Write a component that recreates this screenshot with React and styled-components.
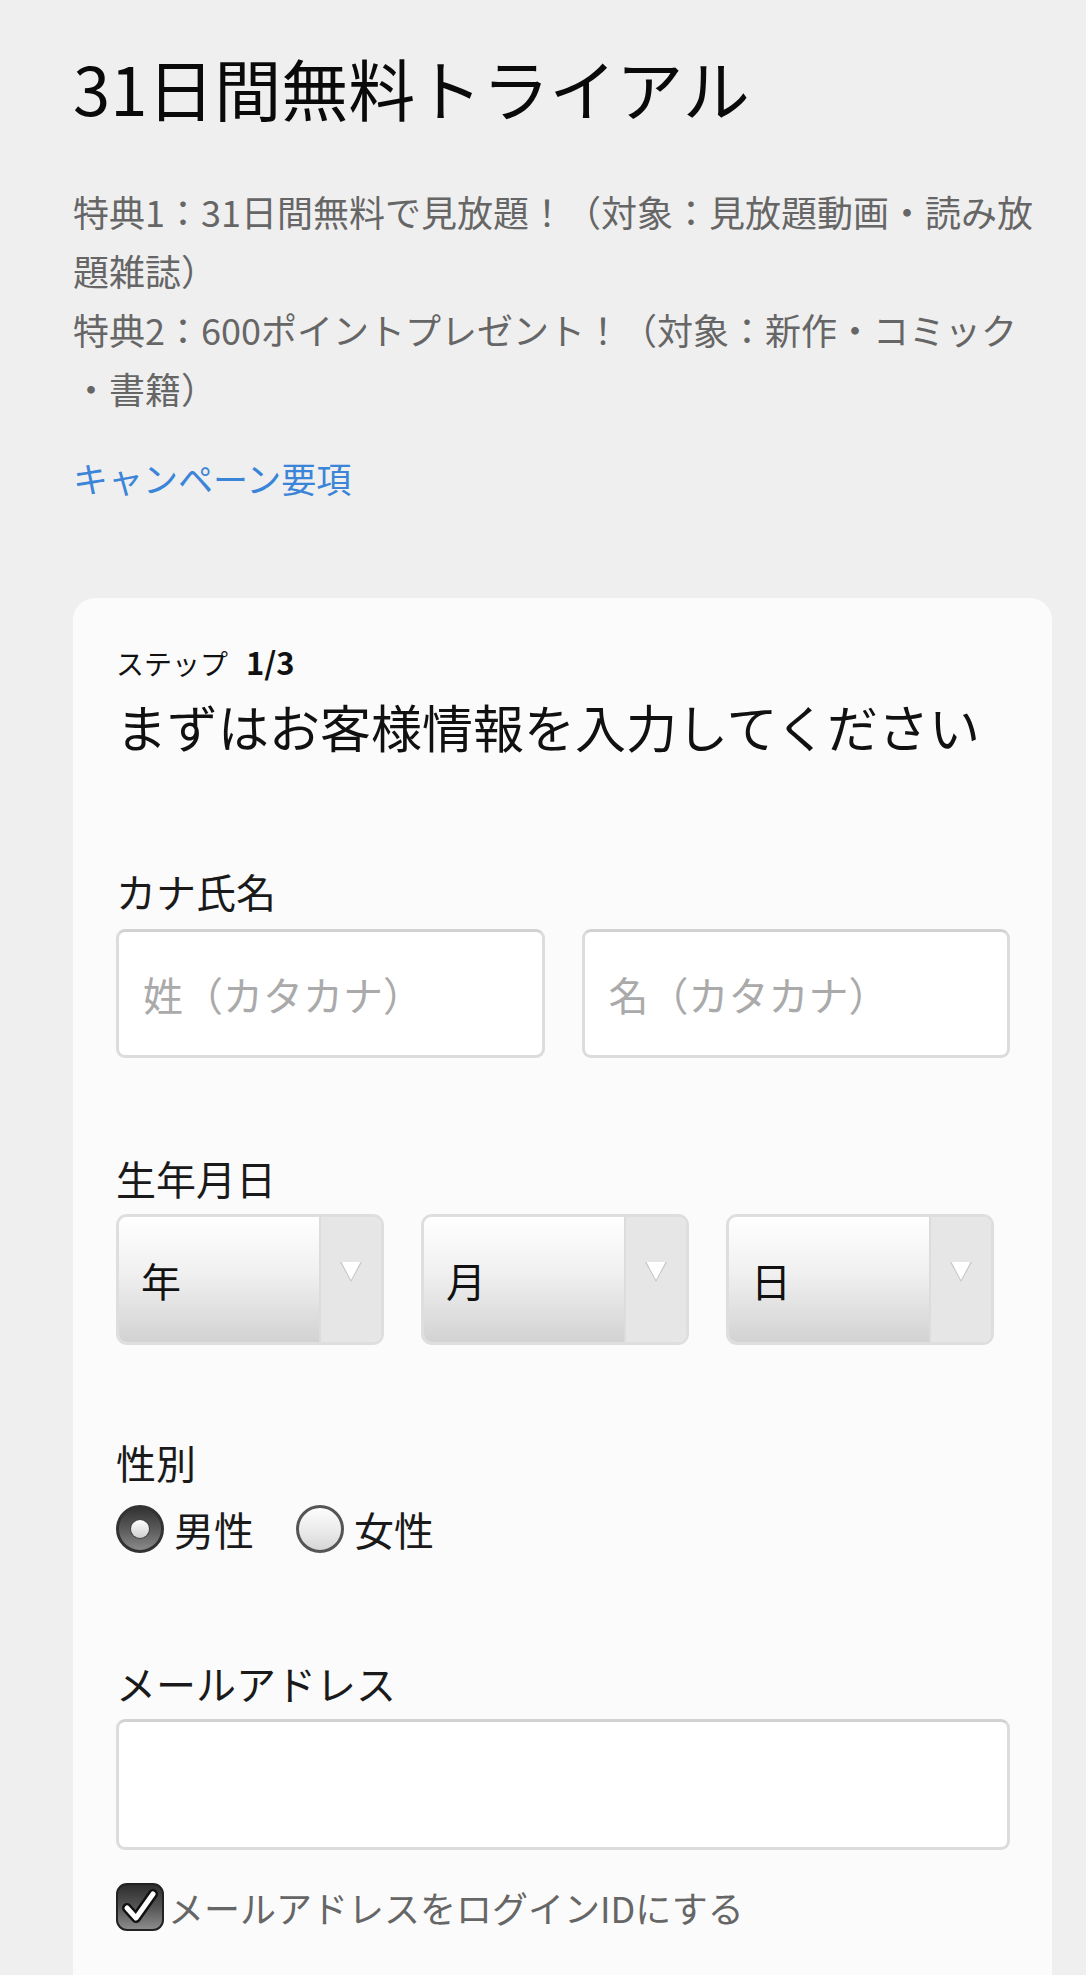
import React from "react";
import styled, { createGlobalStyle } from "styled-components";

const GlobalStyle = createGlobalStyle`
  body {
    margin: 0;
    background: #efefef;
    font-family: "Noto Sans CJK JP", "Noto Sans", sans-serif;
    color: #111;
  }
`;

const Page = styled.div`
  padding: 38px 34px 0 73px;
`;

const Title = styled.h1`
  margin: 0;
  font-size: 67px;
  font-weight: 400;
  line-height: 98px;
  color: #0a0a0a;
`;

const Benefits = styled.p`
  margin: 46px 0 0;
  font-size: 36px;
  line-height: 59px;
  color: #666;
  line-break: anywhere;
`;

const CampaignLink = styled.a`
  display: block;
  margin-top: 30px;
  font-size: 35px;
  line-height: 59px;
  color: #3b85d8;
  text-decoration: none;
`;

const Card = styled.section`
  margin-top: 91px;
  background: #fbfbfb;
  border-radius: 22px 22px 0 0;
  padding: 43px 42px 120px 43px;
`;

const Step = styled.div`
  height: 42px;
  font-size: 28px;
  line-height: 42px;
  color: #111;

  b {
    font-size: 31px;
    line-height: 42px;
    font-weight: 700;
    margin-left: 18px;
  }
`;

const Heading = styled.h2`
  margin: 8px 0 0;
  font-size: 51px;
  font-weight: 400;
  line-height: 70px;
  color: #111;
`;

const Field = styled.div`
  margin-top: ${(p) => p.$top || 90}px;
`;

const Label = styled.div`
  font-size: 40px;
  line-height: 60px;
  color: #1a1a1a;
  margin-bottom: ${(p) => p.$gap || 6}px;
`;

const NameRow = styled.div`
  display: grid;
  grid-template-columns: 1fr 1fr;
  gap: 37px;
`;

const TextInput = styled.input`
  box-sizing: border-box;
  width: 100%;
  height: ${(p) => p.$h || 129}px;
  border: 3px solid #dcdcdc;
  border-top-color: #d2d2d2;
  border-radius: 9px;
  background: #fff;
  padding: 0 24px;
  font-family: inherit;
  font-size: 40px;
  color: #111;
  outline: none;

  &::placeholder {
    color: #aaa;
  }
`;

const SelectRow = styled.div`
  display: flex;
  gap: 37px;
`;

const Select = styled.div`
  box-sizing: border-box;
  width: 268px;
  height: 131px;
  display: flex;
  border: 3px solid #dedede;
  border-radius: 11px;
  overflow: hidden;
`;

const SelectValue = styled.div`
  flex: 1;
  display: flex;
  align-items: center;
  padding-left: 22px;
  font-size: 40px;
  color: #111;
  background: linear-gradient(#ffffff 0%, #f0f0f0 45%, #d2d2d2 100%);
`;

const SelectArrow = styled.div`
  width: 62px;
  display: flex;
  justify-content: center;
  padding-top: 44px;
  box-sizing: border-box;
  background: #e6e6e6;
  border-left: 2px solid #dcdcdc;
`;

const RadioRow = styled.div`
  display: flex;
  align-items: center;
  height: 62px;
  gap: 42px;
`;

const RadioItem = styled.label`
  display: flex;
  align-items: center;
  font-size: 40px;
  color: #1a1a1a;
`;

const RadioCircle = styled.span`
  box-sizing: border-box;
  width: 48px;
  height: 48px;
  border-radius: 50%;
  margin-right: 10px;
  display: flex;
  align-items: center;
  justify-content: center;
  border: 3px solid ${(p) => (p.$checked ? "#333" : "#555")};
  background: ${(p) =>
    p.$checked
      ? "linear-gradient(#333 0%, #5a5a5a 50%, #8a8a8a 100%)"
      : "linear-gradient(#fdfdfd 0%, #e8e8e8 60%, #d6d6d6 100%)"};

  &::after {
    content: "";
    display: ${(p) => (p.$checked ? "block" : "none")};
    width: 18px;
    height: 18px;
    border-radius: 50%;
    background: linear-gradient(#fff, #cfcfcf);
    box-shadow: 0 0 0 1px #444;
  }
`;

const CheckRow = styled.label`
  display: flex;
  align-items: center;
  margin-top: 31px;
  font-size: 36px;
  color: #666;
`;

const CheckBox = styled.span`
  box-sizing: border-box;
  width: 48px;
  height: 48px;
  border-radius: 11px;
  border: 2px solid #222;
  background: linear-gradient(#2e2e2e 0%, #555 50%, #8c8c8c 100%);
  display: flex;
  align-items: center;
  justify-content: center;
  margin-right: 4px;
`;

function Arrow() {
  return (
    <svg width="24" height="22" viewBox="0 0 24 22">
      <polygon points="1,1 23,1 12,21" fill="#c8c8c8" />
      <polygon points="2.5,1 21.5,1 12,19" fill="#fff" />
    </svg>
  );
}

function Check() {
  return (
    <svg width="38" height="38" viewBox="0 0 38 38">
      <polyline
        points="6,20 15,30 32,6"
        fill="none"
        stroke="#111"
        strokeWidth="10"
        strokeLinejoin="round"
        strokeLinecap="round"
      />
      <polyline
        points="6,20 15,30 32,6"
        fill="none"
        stroke="#fff"
        strokeWidth="5"
        strokeLinejoin="round"
        strokeLinecap="round"
      />
    </svg>
  );
}

const selects = ["年", "月", "日"];

export default function App() {
  return (
    <>
      <GlobalStyle />
      <Page>
        <Title>31日間無料トライアル</Title>
        <Benefits>
          特典1：31日間無料で見放題！（対象：見放題動画・読み放題雑誌）
          <br />
          特典2：600ポイントプレゼント！（対象：新作・コミック・書籍）
        </Benefits>
        <CampaignLink href="#">キャンペーン要項</CampaignLink>

        <Card>
          <Step>
            ステップ<b>1/3</b>
          </Step>
          <Heading>まずはお客様情報を入力してください</Heading>

          <Field $top={100}>
            <Label $gap={8}>カナ氏名</Label>
            <NameRow>
              <TextInput placeholder="姓（カタカナ）" />
              <TextInput placeholder="名（カタカナ）" />
            </NameRow>
          </Field>

          <Field>
            <Label>生年月日</Label>
            <SelectRow>
              {selects.map((s) => (
                <Select key={s}>
                  <SelectValue>{s}</SelectValue>
                  <SelectArrow>
                    <Arrow />
                  </SelectArrow>
                </Select>
              ))}
            </SelectRow>
          </Field>

          <Field $top={87}>
            <Label>性別</Label>
            <RadioRow>
              <RadioItem>
                <RadioCircle $checked />
                男性
              </RadioItem>
              <RadioItem>
                <RadioCircle />
                女性
              </RadioItem>
            </RadioRow>
          </Field>

          <Field $top={93}>
            <Label>メールアドレス</Label>
            <TextInput $h={131} />
            <CheckRow>
              <CheckBox>
                <Check />
              </CheckBox>
              メールアドレスをログインIDにする
            </CheckRow>
          </Field>
        </Card>
      </Page>
    </>
  );
}
